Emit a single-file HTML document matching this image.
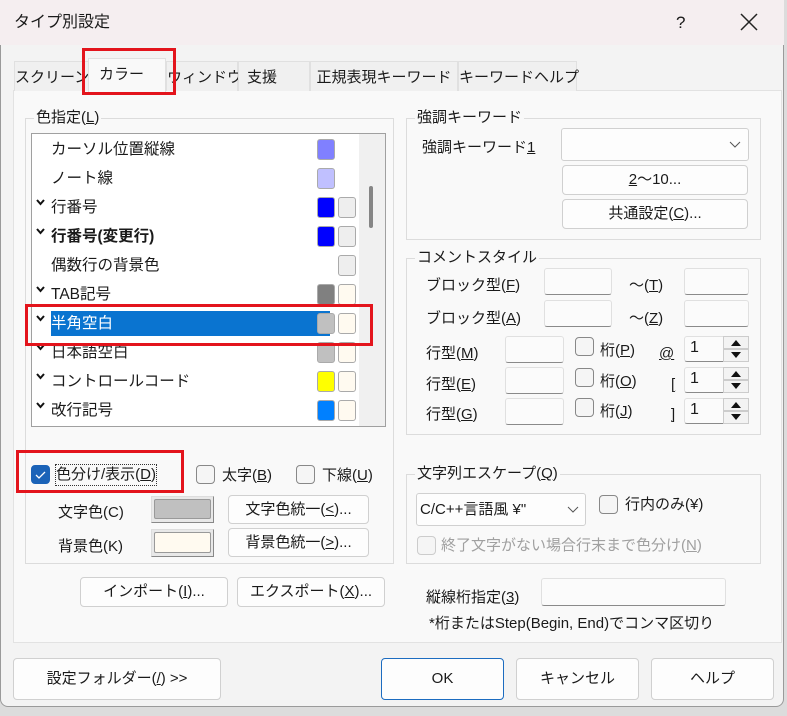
<!DOCTYPE html>
<html><head><meta charset="utf-8"><style>
*{box-sizing:border-box;margin:0;padding:0}
body{width:787px;height:716px;background:#dcdcdc;font-family:"Liberation Sans","Noto Sans CJK JP",sans-serif;font-size:15px;color:#1a1a1a;position:relative;overflow:hidden}
.a{position:absolute}
.win{left:0;top:0;width:784px;height:707px;background:#f3f3f3;border:1px solid #9a9a9a;border-radius:0 0 8px 8px}
.title{left:0;top:0;width:784px;height:45px;background:#f5eef0}
.t{position:absolute;white-space:nowrap;line-height:20px}
.li{font-size:15.5px}
.panel{left:13px;top:90px;width:769px;height:553px;background:#f9f9f9;border:1px solid #e2e2e2}
.tab{position:absolute;top:61px;height:30px;background:#f0f0f0;border:1px solid #e0e0e0;border-bottom:none;padding-top:4px;text-align:center;white-space:nowrap}
.grp{position:absolute;border:1px solid #dcdcdc}
.gl{position:absolute;top:-11px;left:8px;background:#f9f9f9;padding:0 2px;line-height:20px;white-space:nowrap}
.btn{position:absolute;background:#fdfdfd;border:1px solid #d0d0d0;border-radius:4px;text-align:center;white-space:nowrap}
.ed{position:absolute;background:#fbfbfb;border:1px solid #e0e0e0;border-bottom:1px solid #8a8a8a;border-radius:3px}
.cb{position:absolute;width:19px;height:19px;border:1px solid #888;border-radius:4px;background:#f5f5f5}
.sw{position:absolute;width:18px;height:21px;border-radius:3px;border:1px solid #aaa}
.ck{position:absolute;left:36px}
.red{position:absolute;border:3px solid #e3141c}
u{text-decoration:underline}
</style></head><body>
<div class="a win"></div>
<div class="a title"></div>
<div class="t" style="left:14px;top:13px;font-size:16px">タイプ別設定</div>
<div class="t" style="left:676px;top:13px;font-size:17px">?</div>
<svg class="a" style="left:740px;top:13px" width="18" height="18"><path d="M1 1L17 17M17 1L1 17" stroke="#222" stroke-width="1.5"/></svg>

<div class="a panel"></div>
<div class="tab" style="left:14px;width:75px">スクリーン</div>
<div class="tab" style="left:88px;top:58px;height:34px;width:78px;background:#f9f9f9;text-align:left;padding-left:10px">カラー</div>
<div class="tab" style="left:166px;width:72px">ウィンドウ</div>
<div class="tab" style="left:238px;width:72px;text-align:left;padding-left:8px">支援</div>
<div class="tab" style="left:310px;width:148px">正規表現キーワード</div>
<div class="tab" style="left:458px;width:119px">キーワードヘルプ</div>
<div class="red" style="left:82px;top:48px;width:94px;height:47px"></div>

<!-- 色指定 -->
<div class="grp" style="left:25px;top:118px;width:369px;height:446px"><div class="gl">色指定(<u>L</u>)</div></div>
<div class="a" style="left:31px;top:133px;width:355px;height:294px;background:#fff;border:1px solid #a0a0a0"></div>
<div class="a" style="left:359px;top:134px;width:26px;height:292px;background:#f0f0f0"></div>
<div class="a" style="left:369px;top:186px;width:4px;height:42px;background:#858585;border-radius:2px"></div>
<div class="a" style="left:51px;top:311px;width:279px;height:25px;background:#0a74d0"></div>

<div class="t li" style="left:51px;top:140px">カーソル位置縦線</div><div class="sw" style="left:317px;top:139px;background:#8080ff"></div>
<div class="t li" style="left:51px;top:169px">ノート線</div><div class="sw" style="left:317px;top:168px;background:#c0c0ff"></div>
<svg class="ck" style="top:199px" width="9" height="7"><path d="M1 1l3.5 4 3.5-4" stroke="#111" stroke-width="2" fill="none"/></svg><div class="t li" style="left:51px;top:198px">行番号</div><div class="sw" style="left:317px;top:197px;background:#0000ff"></div><div class="sw" style="left:338px;top:197px;background:#eee"></div>
<svg class="ck" style="top:228px" width="9" height="7"><path d="M1 1l3.5 4 3.5-4" stroke="#111" stroke-width="2" fill="none"/></svg><div class="t li" style="left:51px;top:227px;font-weight:bold">行番号(変更行)</div><div class="sw" style="left:317px;top:226px;background:#0000ff"></div><div class="sw" style="left:338px;top:226px;background:#eee"></div>
<div class="t li" style="left:51px;top:256px">偶数行の背景色</div><div class="sw" style="left:338px;top:255px;background:#eee"></div>
<svg class="ck" style="top:286px" width="9" height="7"><path d="M1 1l3.5 4 3.5-4" stroke="#111" stroke-width="2" fill="none"/></svg><div class="t li" style="left:51px;top:285px">TAB記号</div><div class="sw" style="left:317px;top:284px;background:#808080"></div><div class="sw" style="left:338px;top:284px;background:#fffaf0"></div>
<svg class="ck" style="top:315px" width="9" height="7"><path d="M1 1l3.5 4 3.5-4" stroke="#111" stroke-width="2" fill="none"/></svg><div class="t li" style="left:51px;top:314px;color:#fff">半角空白</div><div class="sw" style="left:317px;top:313px;background:#c0c0c0"></div><div class="sw" style="left:338px;top:313px;background:#fffaf0"></div>
<svg class="ck" style="top:344px" width="9" height="7"><path d="M1 1l3.5 4 3.5-4" stroke="#111" stroke-width="2" fill="none"/></svg><div class="t li" style="left:51px;top:343px">日本語空白</div><div class="sw" style="left:317px;top:342px;background:#c0c0c0"></div><div class="sw" style="left:338px;top:342px;background:#fffaf0"></div>
<svg class="ck" style="top:373px" width="9" height="7"><path d="M1 1l3.5 4 3.5-4" stroke="#111" stroke-width="2" fill="none"/></svg><div class="t li" style="left:51px;top:372px">コントロールコード</div><div class="sw" style="left:317px;top:371px;background:#ffff00"></div><div class="sw" style="left:338px;top:371px;background:#fffaf0"></div>
<svg class="ck" style="top:402px" width="9" height="7"><path d="M1 1l3.5 4 3.5-4" stroke="#111" stroke-width="2" fill="none"/></svg><div class="t li" style="left:51px;top:401px">改行記号</div><div class="sw" style="left:317px;top:400px;background:#0080ff"></div><div class="sw" style="left:338px;top:400px;background:#fffaf0"></div>
<div class="red" style="left:25px;top:304px;width:348px;height:42px"></div>

<div class="cb" style="left:31px;top:465px;background:#1b63b8;border-color:#1b63b8"></div>
<svg class="a" style="left:31px;top:465px" width="19" height="19"><path d="M5 10l3 3 6-6" stroke="#fff" stroke-width="1.3" fill="none"/></svg>
<div class="t" style="left:56px;top:465px;outline:1px dotted #333">色分け/表示(<u>D</u>)</div>
<div class="red" style="left:16px;top:450px;width:168px;height:43px"></div>
<div class="cb" style="left:196px;top:465px"></div><div class="t" style="left:222px;top:466px">太字(<u>B</u>)</div>
<div class="cb" style="left:296px;top:465px"></div><div class="t" style="left:322px;top:466px">下線(<u>U</u>)</div>

<div class="t" style="left:58px;top:503px">文字色(C)</div>
<div class="a" style="left:151px;top:496px;width:63px;height:27px;background:#e8e8e8;border:1px solid #888;border-top-color:#ddd;border-left-color:#ddd"><div style="margin:2px;height:20px;background:#c0c0c0;border:1px solid #999;border-radius:2px"></div></div>
<div class="btn" style="left:228px;top:495px;width:141px;height:29px;line-height:27px">文字色統一(<u>&lt;</u>)...</div>
<div class="t" style="left:58px;top:537px">背景色(K)</div>
<div class="a" style="left:151px;top:529px;width:63px;height:28px;background:#e8e8e8;border:1px solid #888;border-top-color:#ddd;border-left-color:#ddd"><div style="margin:2px;height:21px;background:#fffaf0;border:1px solid #999;border-radius:2px"></div></div>
<div class="btn" style="left:228px;top:528px;width:141px;height:29px;line-height:27px">背景色統一(<u>&gt;</u>)...</div>

<div class="btn" style="left:80px;top:577px;width:148px;height:30px;line-height:28px">インポート(<u>I</u>)...</div>
<div class="btn" style="left:237px;top:577px;width:148px;height:30px;line-height:28px">エクスポート(<u>X</u>)...</div>

<!-- 強調キーワード -->
<div class="grp" style="left:406px;top:118px;width:355px;height:122px"><div class="gl">強調キーワード</div></div>
<div class="t" style="left:422px;top:138px">強調キーワード<u>1</u></div>
<div class="btn" style="left:561px;top:128px;width:188px;height:33px;border-radius:3px"></div>
<svg class="a" style="left:729px;top:141px" width="12" height="8"><path d="M1 1l5 5 5-5" stroke="#555" fill="none"/></svg>
<div class="btn" style="left:562px;top:165px;width:186px;height:30px;line-height:28px"><u>2</u>〜10...</div>
<div class="btn" style="left:562px;top:199px;width:186px;height:30px;line-height:28px">共通設定(<u>C</u>)...</div>

<!-- コメントスタイル -->
<div class="grp" style="left:406px;top:258px;width:355px;height:177px"><div class="gl">コメントスタイル</div></div>
<div class="t" style="left:426px;top:276px">ブロック型(<u>F</u>)</div>
<div class="ed" style="left:544px;top:268px;width:68px;height:27px"></div>
<div class="t" style="left:629px;top:276px">〜(<u>T</u>)</div>
<div class="ed" style="left:684px;top:268px;width:65px;height:27px"></div>
<div class="t" style="left:426px;top:309px">ブロック型(<u>A</u>)</div>
<div class="ed" style="left:544px;top:300px;width:68px;height:27px"></div>
<div class="t" style="left:629px;top:309px">〜(<u>Z</u>)</div>
<div class="ed" style="left:684px;top:300px;width:65px;height:27px"></div>

<div class="t" style="left:426px;top:344px">行型(<u>M</u>)</div>
<div class="ed" style="left:505px;top:336px;width:59px;height:27px"></div>
<div class="cb" style="left:575px;top:337px"></div><div class="t" style="left:600px;top:341px">桁(<u>P</u>)</div>
<div class="t" style="left:659px;top:344px"><u>@</u></div>
<div class="t" style="left:426px;top:375px">行型(<u>E</u>)</div>
<div class="ed" style="left:505px;top:367px;width:59px;height:27px"></div>
<div class="cb" style="left:575px;top:368px"></div><div class="t" style="left:600px;top:372px">桁(<u>O</u>)</div>
<div class="t" style="left:671px;top:375px"><u>[</u></div>
<div class="t" style="left:426px;top:405px">行型(<u>G</u>)</div>
<div class="ed" style="left:505px;top:398px;width:59px;height:27px"></div>
<div class="cb" style="left:575px;top:398px"></div><div class="t" style="left:600px;top:402px">桁(<u>J</u>)</div>
<div class="t" style="left:671px;top:405px"><u>]</u></div>

<!-- spins -->
<div class="ed" style="left:684px;top:336px;width:65px;height:26px"></div><div class="t" style="left:690px;top:338px;font-size:16px">1</div>
<div class="ed" style="left:684px;top:367px;width:65px;height:26px"></div><div class="t" style="left:690px;top:369px;font-size:16px">1</div>
<div class="ed" style="left:684px;top:398px;width:65px;height:26px"></div><div class="t" style="left:690px;top:400px;font-size:16px">1</div>
<svg class="a" style="left:723px;top:336px" width="26" height="90">
<g fill="#f3f3f3" stroke="#ccc"><rect x=".5" y=".5" width="25" height="12"/><rect x=".5" y="13.5" width="25" height="12"/><rect x=".5" y="31.5" width="25" height="12"/><rect x=".5" y="44.5" width="25" height="12"/><rect x=".5" y="62.5" width="25" height="12"/><rect x=".5" y="75.5" width="25" height="12"/></g>
<g fill="#111"><path d="M8 10h10l-5-6z"/><path d="M8 16h10l-5 6z"/><path d="M8 41h10l-5-6z"/><path d="M8 47h10l-5 6z"/><path d="M8 72h10l-5-6z"/><path d="M8 78h10l-5 6z"/></g></svg>

<!-- 文字列エスケープ -->
<div class="grp" style="left:406px;top:474px;width:355px;height:90px"><div class="gl">文字列エスケープ(<u>Q</u>)</div></div>
<div class="btn" style="left:416px;top:493px;width:170px;height:33px;border-radius:3px;text-align:left;padding-left:3px;line-height:31px">C/C++言語風 ¥"</div>
<svg class="a" style="left:567px;top:506px" width="12" height="8"><path d="M1 1l5 5 5-5" stroke="#555" fill="none"/></svg>
<div class="cb" style="left:599px;top:495px"></div><div class="t" style="left:625px;top:495px">行内のみ(¥)</div>
<div class="cb" style="left:417px;top:536px;border-color:#ccc"></div><div class="t" style="left:441px;top:536px;color:#a0a0a0">終了文字がない場合行末まで色分け(<u>N</u>)</div>

<div class="t" style="left:426px;top:588px">縦線桁指定(<u>3</u>)</div>
<div class="ed" style="left:541px;top:578px;width:185px;height:28px"></div>
<div class="t" style="left:429px;top:614px">*桁またはStep(Begin, End)でコンマ区切り</div>

<!-- bottom buttons -->
<div class="btn" style="left:13px;top:658px;width:208px;height:42px;line-height:40px">設定フォルダー(<u>/</u>) &gt;&gt;</div>
<div class="btn" style="left:381px;top:658px;width:123px;height:42px;line-height:40px;border-color:#1c6cc0">OK</div>
<div class="btn" style="left:516px;top:658px;width:123px;height:42px;line-height:40px">キャンセル</div>
<div class="btn" style="left:651px;top:658px;width:123px;height:42px;line-height:40px">ヘルプ</div>
</body></html>
